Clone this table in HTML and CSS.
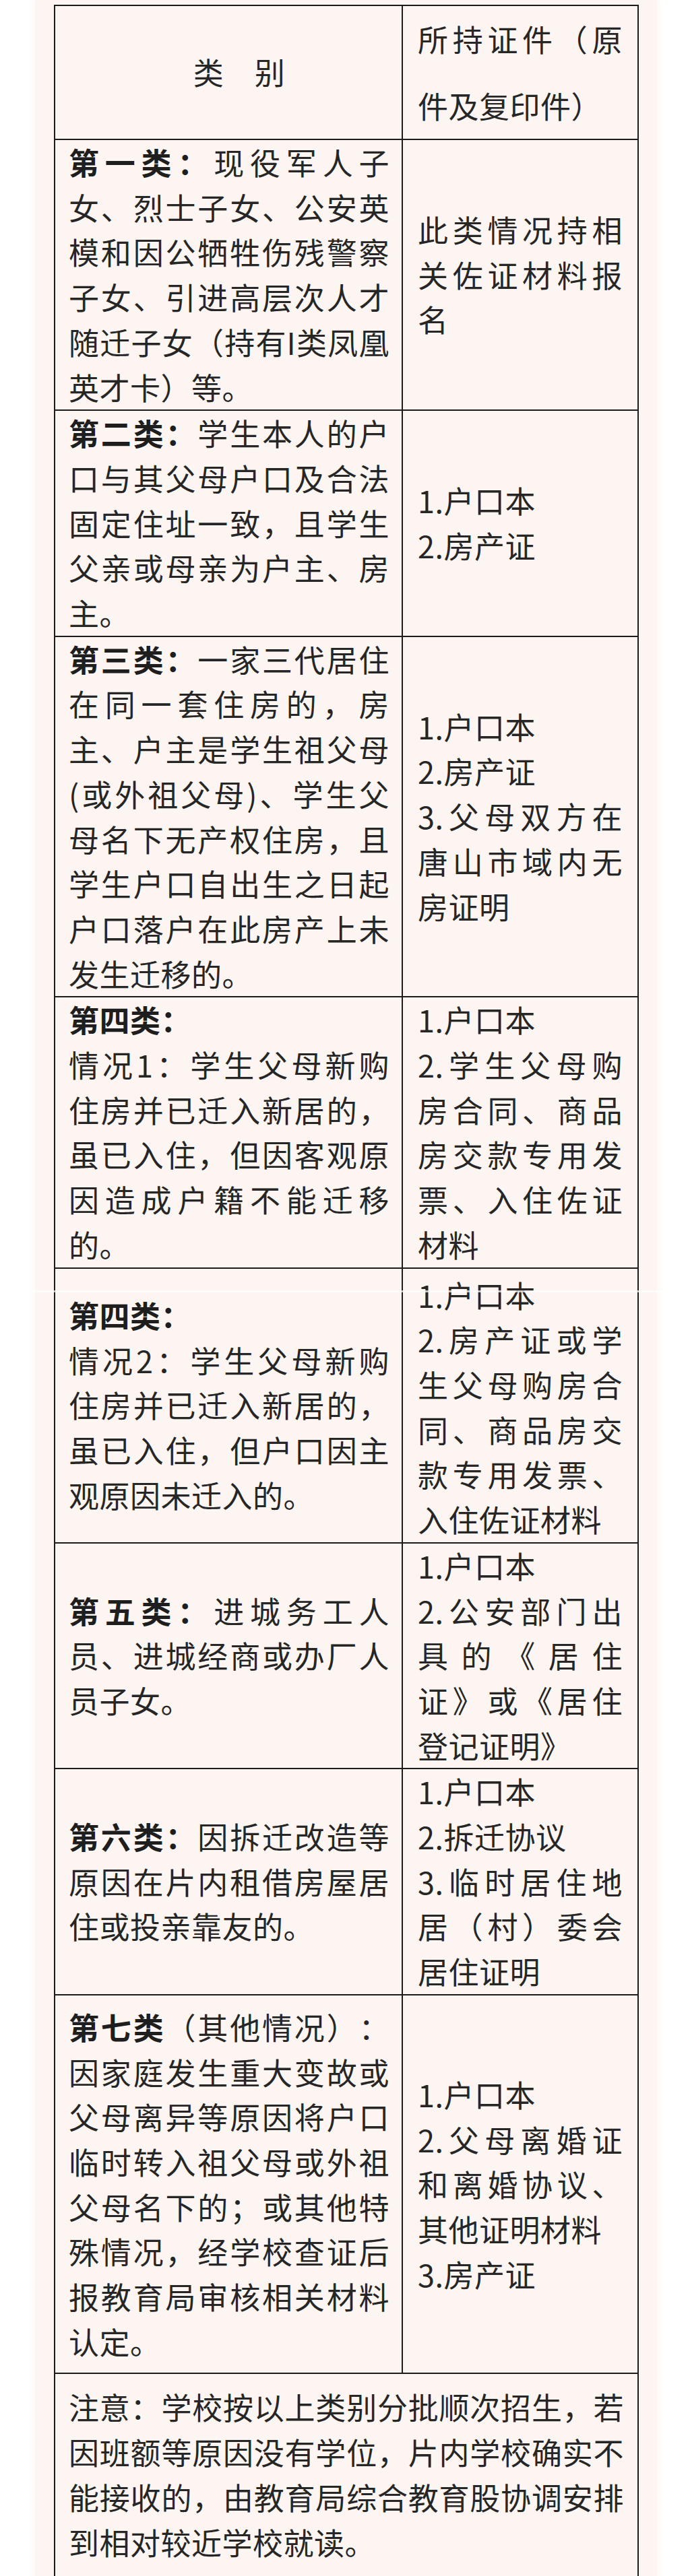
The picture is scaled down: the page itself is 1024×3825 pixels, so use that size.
FILE: index.html
```html
<!DOCTYPE html>
<html lang="zh-CN">
<head>
<meta charset="utf-8">
<title>类别与所持证件</title>
<link rel="stylesheet" href="styles.css">
</head>
<body>
<div class="sheet">
  <table class="grid">
    <colgroup><col class="col-cat"><col class="col-doc"></colgroup>
    <tr class="head">
      <td class="h-cat">类　别</td>
      <td class="h-doc">所持证件（原件及复印件）</td>
    </tr>
    <tr>
      <td class="cat"><b>第一类：</b>现役军人子女、烈士子女、公安英模和因公牺牲伤残警察子女、引进高层次人才随迁子女（持有I类凤凰英才卡）等。</td>
      <td class="doc">此类情况持相关佐证材料报名</td>
    </tr>
    <tr>
      <td class="cat"><b>第二类：</b>学生本人的户口与其父母户口及合法固定住址一致，且学生父亲或母亲为户主、房主。</td>
      <td class="doc">1.户口本<br>2.房产证</td>
    </tr>
    <tr>
      <td class="cat"><b>第三类：</b>一家三代居住在同一套住房的，房主、户主是学生祖父母(或外祖父母)、学生父母名下无产权住房，且学生户口自出生之日起户口落户在此房产上未发生迁移的。</td>
      <td class="doc">1.户口本<br>2.房产证<br>3.父母双方在唐山市域内无房证明</td>
    </tr>
    <tr>
      <td class="cat"><b>第四类：</b><br>情况1：学生父母新购住房并已迁入新居的，虽已入住，但因客观原因造成户籍不能迁移的。</td>
      <td class="doc">1.户口本<br>2.学生父母购房合同、商品房交款专用发票、入住佐证材料</td>
    </tr>
    <tr class="seam-row">
      <td class="cat"><b>第四类：</b><br>情况2：学生父母新购住房并已迁入新居的，虽已入住，但户口因主观原因未迁入的。</td>
      <td class="doc">1.户口本<br>2.房产证或学生父母购房合同、商品房交款专用发票、入住佐证材料</td>
    </tr>
    <tr>
      <td class="cat"><b>第五类：</b>进城务工人员、进城经商或办厂人员子女。</td>
      <td class="doc">1.户口本<br>2.公安部门出具的《居住证》或《居住登记证明》</td>
    </tr>
    <tr>
      <td class="cat"><b>第六类：</b>因拆迁改造等原因在片内租借房屋居住或投亲靠友的。</td>
      <td class="doc">1.户口本<br>2.拆迁协议<br>3.临时居住地居（村）委会居住证明</td>
    </tr>
    <tr class="tall">
      <td class="cat"><b>第七类</b>（其他情况）：因家庭发生重大变故或父母离异等原因将户口临时转入祖父母或外祖父母名下的；或其他特殊情况，经学校查证后报教育局审核相关材料认定。</td>
      <td class="doc">1.户口本<br>2.父母离婚证和离婚协议、其他证明材料<br>3.房产证</td>
    </tr>
    <tr>
      <td class="note" colspan="2">注意：学校按以上类别分批顺次招生，若因班额等原因没有学位，片内学校确实不能接收的，由教育局综合教育股协调安排到相对较近学校就读。</td>
    </tr>
  </table>
</div>
<div class="seam"></div>
</body>
</html>
```

FILE: styles.css
```css
html, body {
  margin: 0;
  padding: 0;
  background: #ffffff;
}

body {
  position: relative;
  font-family: "Noto Sans CJK SC", "Noto Sans", sans-serif;
  color: #262626;
}

.sheet {
  width: 923px;
  margin-left: 52px;
  padding: 7px 0 3px 28px;
  box-sizing: border-box;
  background: #fcf5f1;
  box-shadow: 0 0 10px 3px #fdf8f5;
}

.grid {
  border-collapse: collapse;
  table-layout: fixed;
  width: 866px;
  font-size: 45px;
  letter-spacing: 0.5px;
  line-height: 66.7px;
  text-spacing-trim: space-all;
  line-break: strict;
}

.col-cat { width: 516px; }
.col-doc { width: 350px; }

.grid td {
  border: 2px solid #1c1c1c;
  vertical-align: middle;
  text-align: justify;
  padding: 0;
}

.grid b {
  font-weight: 700;
  color: #1e1e1e;
}

.head td {
  line-height: 98.5px;
}

.h-cat {
  text-align: center !important;
  padding: 0 18px 0 50px !important;
}

.h-doc,
.doc {
  padding: 0 22px 0 22px !important;
}

.cat {
  padding: 0 18px 0 20px !important;
}

.seam-row .doc {
  padding-top: 6px !important;
}

.tall td {
  padding-top: 14px !important;
  padding-bottom: 13px !important;
}

.note {
  padding: 16px 20px 18px 20px !important;
}

.seam {
  position: absolute;
  left: 0;
  right: 0;
  top: 1916px;
  height: 3px;
  background: rgba(255, 255, 255, 0.7);
}
```
